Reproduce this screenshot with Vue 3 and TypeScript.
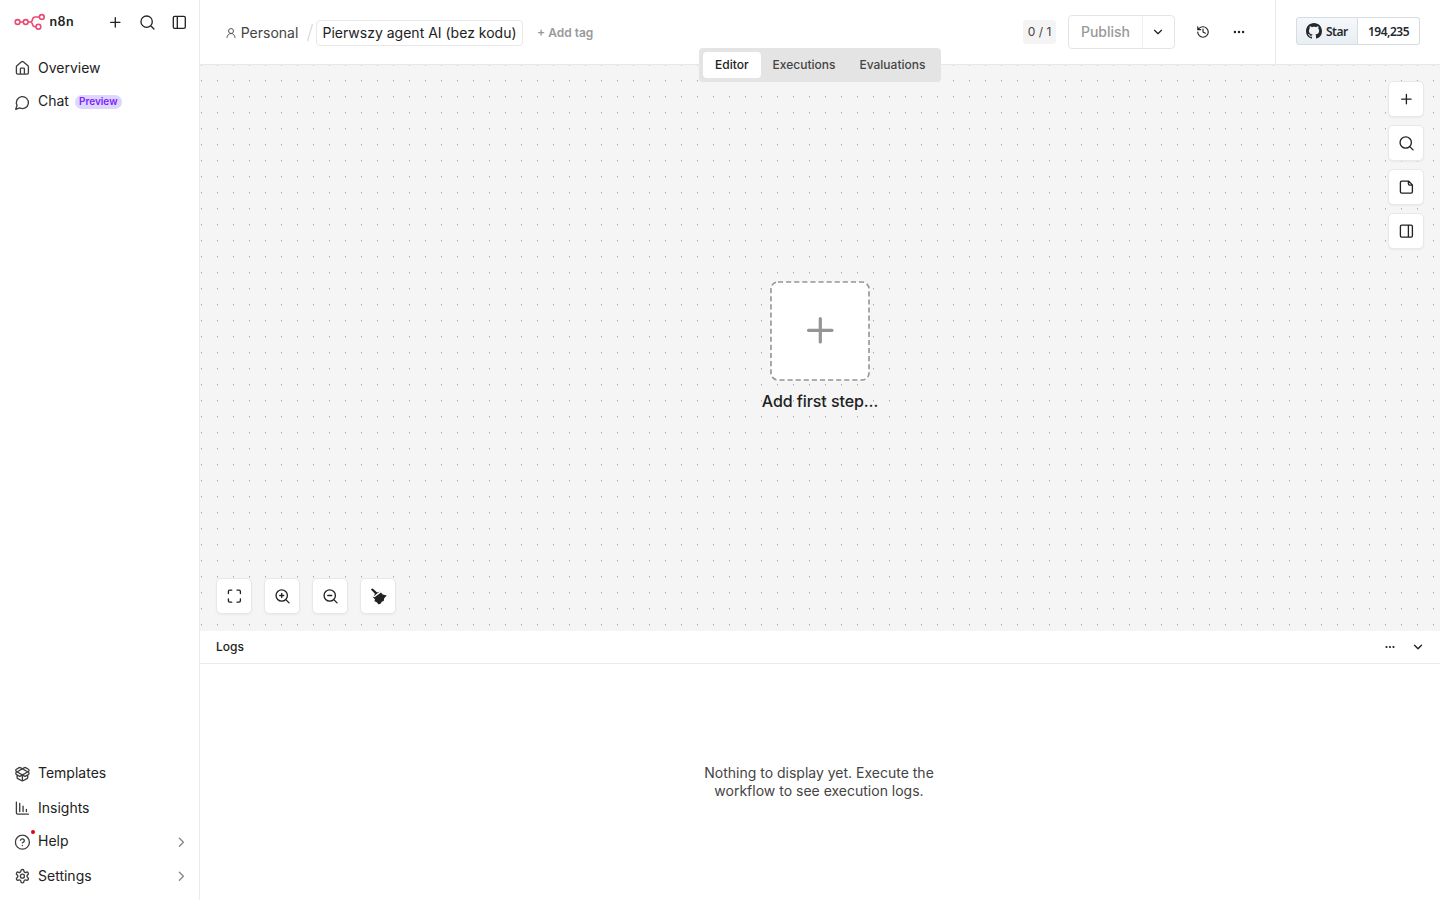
<script setup lang="ts">
import { h } from 'vue'

const circle = (cx: number, cy: number, r: number) =>
  `M${cx - r} ${cy}a${r} ${r} 0 1 0 ${2 * r} 0a${r} ${r} 0 1 0 ${-2 * r} 0`

const icons: Record<string, string> = {
  plus: 'M5 12h14M12 5v14',
  search: circle(11, 11, 8.5) + 'M22 22l-4.5-4.5',
  panelLeft: 'M5 3h14a2 2 0 0 1 2 2v14a2 2 0 0 1-2 2H5a2 2 0 0 1-2-2V5a2 2 0 0 1 2-2zM9 3v18',
  panelRight: 'M5 3h14a2 2 0 0 1 2 2v14a2 2 0 0 1-2 2H5a2 2 0 0 1-2-2V5a2 2 0 0 1 2-2zM15 3v18',
  home: 'M15 21v-8a1 1 0 0 0-1-1h-4a1 1 0 0 0-1 1v8M3 10a2 2 0 0 1 .709-1.528l7-5.999a2 2 0 0 1 2.582 0l7 5.999A2 2 0 0 1 21 10v9a2 2 0 0 1-2 2H5a2 2 0 0 1-2-2z',
  chat: 'M7.9 20A9 9 0 1 0 4 16.1L2 22Z',
  templates: 'M12 22v-9M15.17 2.21a1.67 1.67 0 0 1 1.63 0L21 4.57a1.93 1.93 0 0 1 0 3.36L8.82 14.79a1.655 1.655 0 0 1-1.64 0L3 12.43a1.93 1.93 0 0 1 0-3.36zM20 13v3.87a2.06 2.06 0 0 1-1.11 1.83l-6 3.08a1.93 1.93 0 0 1-1.78 0l-6-3.08A2.06 2.06 0 0 1 4 16.87V13M21 12.43a1.93 1.93 0 0 0 0-3.36L8.83 2.2a1.64 1.64 0 0 0-1.63 0L3 4.57a1.93 1.93 0 0 0 0 3.36l12.18 6.86a1.636 1.636 0 0 0 1.63 0z',
  insights: 'M3 3v16a2 2 0 0 0 2 2h16M8 17V5M13 17V9M18 17v-3',
  help: circle(12, 12, 10.5) + 'M9.09 9a3 3 0 0 1 5.83 1c0 2-3 3-3 3M12 17h.01',
  settings: 'M12.22 2h-.44a2 2 0 0 0-2 2v.18a2 2 0 0 1-1 1.73l-.43.25a2 2 0 0 1-2 0l-.15-.08a2 2 0 0 0-2.73.73l-.22.38a2 2 0 0 0 .73 2.73l.15.1a2 2 0 0 1 1 1.72v.51a2 2 0 0 1-1 1.74l-.15.09a2 2 0 0 0-.73 2.73l.22.38a2 2 0 0 0 2.73.73l.15-.08a2 2 0 0 1 2 0l.43.25a2 2 0 0 1 1 1.73V20a2 2 0 0 0 2 2h.44a2 2 0 0 0 2-2v-.18a2 2 0 0 1 1-1.73l.43-.25a2 2 0 0 1 2 0l.15.08a2 2 0 0 0 2.73-.73l.22-.39a2 2 0 0 0-.73-2.73l-.15-.08a2 2 0 0 1-1-1.74v-.5a2 2 0 0 1 1-1.74l.15-.09a2 2 0 0 0 .73-2.73l-.22-.38a2 2 0 0 0-2.73-.73l-.15.08a2 2 0 0 1-2 0l-.43-.25a2 2 0 0 1-1-1.73V4a2 2 0 0 0-2-2z' + circle(12, 12, 3),
  right: 'M9 18l6-6-6-6',
  down: 'M6 9l6 6 6-6',
  user: circle(12, 8, 5) + 'M20 21a8 8 0 0 0-16 0',
  history: 'M3 12a9 9 0 1 0 9-9 9.75 9.75 0 0 0-6.74 2.74L3 8M3 3v5h5M12 7v5l4 2',
  dots: circle(12, 12, 1) + circle(19, 12, 1) + circle(5, 12, 1),
  note: 'M15.5 3H5a2 2 0 0 0-2 2v14a2 2 0 0 0 2 2h14a2 2 0 0 0 2-2V8.5zM15 3v4a2 2 0 0 0 2 2h4',
  fit: 'M8 3H5a2 2 0 0 0-2 2v3M21 8V5a2 2 0 0 0-2-2h-3M3 16v3a2 2 0 0 0 2 2h3M16 21h3a2 2 0 0 0 2-2v-3',
  zoomIn: circle(11, 11, 8.5) + 'M22 22l-4.5-4.5M11 8v6M8 11h6',
  zoomOut: circle(11, 11, 8.5) + 'M22 22l-4.5-4.5M8 11h6',
}

const Icon = (props: { name: string; size?: number; weight?: number }) =>
  h(
    'svg',
    {
      viewBox: '0 0 24 24',
      width: props.size ?? 16,
      height: props.size ?? 16,
      fill: 'none',
      stroke: 'currentColor',
      'stroke-width': props.weight ?? 2,
      'stroke-linecap': 'round',
      'stroke-linejoin': 'round',
    },
    [h('path', { d: icons[props.name] })],
  )
Icon.props = ['name', 'size', 'weight']

const bottomItems = [
  { label: 'Templates', icon: 'templates' },
  { label: 'Insights', icon: 'insights' },
  { label: 'Help', icon: 'help', arrow: true, alert: true },
  { label: 'Settings', icon: 'settings', arrow: true },
]
const tools = ['plus', 'search', 'note', 'panelRight']
const zoomTools = ['fit', 'zoomIn', 'zoomOut']
</script>

<template>
  <div class="app">
    <aside class="sidebar">
      <div class="brand">
        <svg class="logo" width="32" height="18" viewBox="0 0 32 18" fill="none" stroke="#ea4b71" stroke-width="1.6">
          <circle cx="3.6" cy="9" r="2.4" />
          <circle cx="11.7" cy="9" r="2.4" />
          <circle cx="27.8" cy="4" r="2.4" />
          <circle cx="24.4" cy="13.7" r="2.4" />
          <path d="M6 9h3.3M14.1 9h2.1c1.7 0 2-.9 2.3-2.6.3-1.7 1-2.4 2.6-2.4h4.3M16.2 9c1.7 0 2 .8 2.3 2.4.3 1.6 1 2.3 2.6 2.3h.9" />
        </svg>
        <span class="wordmark">n8n</span>
        <div class="brand-actions">
          <Icon name="plus" />
          <Icon name="search" />
          <Icon name="panelLeft" />
        </div>
      </div>
      <nav class="nav top">
        <a class="item"><Icon name="home" /><span class="label">Overview</span></a>
        <a class="item chat"><Icon name="chat" /><span class="label">Chat</span><span class="preview">Preview</span></a>
      </nav>
      <nav class="nav bottom">
        <a v-for="item in bottomItems" :key="item.label" class="item" :class="item.icon">
          <Icon :name="item.icon" />
          <i v-if="item.alert" class="alert"></i>
          <span class="label">{{ item.label }}</span>
          <Icon v-if="item.arrow" class="arrow" name="right" />
        </a>
      </nav>
    </aside>

    <main class="main">
      <header class="header">
        <div class="crumbs">
          <Icon class="user" name="user" :size="12" />
          <span class="personal">Personal</span>
          <svg class="slash" width="8" height="20" viewBox="0 0 8 20"><path d="M6.5 1L1.5 18" stroke="#dcdcdc" stroke-width="1.3" /></svg>
          <span class="title">Pierwszy agent AI (bez kodu)</span>
          <span class="tag">+ Add tag</span>
        </div>
        <div class="actions">
          <span class="count">0 / 1</span>
          <div class="publish">
            <span class="publish-label">Publish</span>
            <span class="publish-more"><Icon name="down" :size="14" /></span>
          </div>
          <Icon class="history" name="history" :size="14" />
          <Icon class="more" name="dots" :size="14" :weight="2.2" />
        </div>
        <div class="github">
          <div class="star">
            <svg width="16" height="16" viewBox="0 0 16 16" fill="#24292f">
              <path d="M8 0c4.420 0 8 3.580 8 8a8.013 8.013 0 0 1-5.450 7.590c-.4.080-.550-.170-.550-.380 0-.270.010-1.130.010-2.200 0-.750-.250-1.230-.540-1.480 1.780-.200 3.650-.880 3.650-3.950 0-.880-.310-1.590-.820-2.150.080-.200.360-1.020-.080-2.120 0 0-.670-.220-2.200.820-.640-.180-1.320-.270-2-.270-.680 0-1.360.090-2 .270-1.530-1.030-2.200-.820-2.200-.820-.440 1.100-.160 1.920-.080 2.120-.510.560-.820 1.280-.820 2.150 0 3.060 1.860 3.750 3.640 3.950-.230.200-.440.550-.510 1.070-.460.210-1.610.550-2.330-.660-.150-.240-.600-.830-1.230-.820-.670.010-.270.380.010.530.340.190.730.900.820 1.130.160.450.680 1.310 2.690.940 0 .670.010 1.300.010 1.490 0 .210-.150.450-.550.380A7.995 7.995 0 0 1 0 8c0-4.420 3.580-8 8-8Z" />
            </svg>
            <span>Star</span>
          </div>
          <div class="stars">194,235</div>
        </div>
      </header>

      <section class="canvas">
        <div class="tabs">
          <span class="tab active">Editor</span>
          <span class="tab">Executions</span>
          <span class="tab">Evaluations</span>
        </div>
        <div class="toolbar">
          <button v-for="t in tools" :key="t" class="tool"><Icon :name="t" /></button>
        </div>
        <div class="first-step">
          <svg width="100" height="100" viewBox="0 0 100 100" fill="none">
            <rect x="1" y="1" width="98" height="98" rx="7" fill="#fff" stroke="#959595" stroke-width="1.6" stroke-dasharray="5.1 3" />
            <path d="M50.3 37.5v23.5M38.5 49.3h23.5" stroke="#959595" stroke-width="3.2" stroke-linecap="round" />
          </svg>
          <div class="step-label">Add first step…</div>
        </div>
        <div class="zoombar">
          <button v-for="t in zoomTools" :key="t" class="tool"><Icon :name="t" /></button>
          <button class="tool">
            <svg width="17" height="17" viewBox="0 0 17 17" fill="#222">
              <path d="M.5 1.400L2 0 6.800 4.300 9.400 3.400 3.400 8.100 4.500 5.600z" />
              <path d="M10.600 4.200L12.400 6.300 16.400 7.200 13.800 10 13.300 12.800 11.200 13.500 10.700 15 8.400 16.400 6 13.900 4 13 4.600 11.400 2.100 8.300 4.200 9z" />
            </svg>
          </button>
        </div>
      </section>

      <section class="logs">
        <div class="logs-head">
          <span class="logs-title">Logs</span>
          <div class="logs-actions">
            <Icon name="dots" :size="12" :weight="2.4" />
            <Icon name="down" :size="14" :weight="2.3" />
          </div>
        </div>
        <div class="empty">Nothing to display yet. Execute the<br />workflow to see execution logs.</div>
      </section>
    </main>
  </div>
</template>

<style>
body { background: #fff; overflow: hidden; }
</style>

<style scoped>
.app {
  display: flex;
  width: 1440px;
  height: 900px;
  overflow: hidden;
  font-family: Inter, "Liberation Sans", sans-serif;
  color: #222;
}
.app svg { display: block; flex: none; }
.sidebar {
  width: 200px;
  box-sizing: border-box;
  border-right: 1px solid #ebebeb;
  display: flex;
  flex-direction: column;
  flex: none;
}
.brand { display: flex; align-items: center; height: 44px; padding: 0 12px 0 14px; }
.wordmark { margin: -1px 0 0 3.500px; font-size: 12.5px; font-weight: 600; letter-spacing: .4px; }
.brand-actions { display: flex; gap: 16px; margin-left: auto; }
.brand-actions svg { transform: translate(.3px, .3px); }
.nav { display: flex; flex-direction: column; padding: 0 10px 0 14px; font-size: 14px; }
.top { margin-top: 7px; }
.bottom { margin-top: auto; padding-bottom: 7px; }
.item { display: flex; align-items: center; height: 34px; position: relative; }
.item > svg { color: #3d3d3d; transform: translate(.4px, .2px); }
.chat > svg { transform: translate(.4px, .6px); }
.label { margin-left: 8px; line-height: 20px; }
.chat .label, .help .label, .templates .label { margin-top: -2px; }
.preview {
  margin-left: 6px;
  height: 14px;
  line-height: 13px;
  padding: 0 4px;
  border-radius: 7px;
  background: #ddd6ff;
  color: #7f22fe;
  font-size: 10px;
  font-weight: 600;
}
.alert { position: absolute; left: 16.5px; top: 5px; width: 4px; height: 4px; border-radius: 50%; background: #e7000b; }
.item > .arrow { margin-left: auto; color: #888; }

.main { flex: 1; min-width: 0; display: flex; flex-direction: column; }
.header { height: 65px; box-sizing: border-box; border-bottom: 1px solid #e8e8e8; display: flex; flex: none; }
.crumbs { flex: 1; display: flex; align-items: center; padding: 2px 0 0 25px; font-size: 14px; }
.user { color: #555; }
.personal { margin: -1px 0 0 3.7px; color: #444; }
.slash { margin-left: 8px; }
.title { margin-left: 1.7px; height: 24px; line-height: 23px; padding: 0 5.5px; border: 1px solid #e8e8e8; border-radius: 4px; }
.tag { margin: -1px 0 0 14px; font-size: 12px; font-weight: 600; color: #999; }
.actions { display: flex; align-items: center; padding-right: 29px; border-right: 1px solid #e8e8e8; }
.count { width: 33px; height: 24px; line-height: 24px; text-align: center; background: #f4f4f4; border-radius: 4px; font-size: 12px; color: #444; }
.publish { margin-left: 12px; display: flex; height: 34px; width: 107px; box-sizing: border-box; border: 1px solid #e4e4e4; border-radius: 4px; }
.publish-label { width: 73px; border-right: 1px solid #eee; text-align: center; font-size: 14px; font-weight: 500; line-height: 32px; color: #999; }
.publish-more { flex: 1; display: flex; align-items: center; padding-left: 8px; }
.history { margin-left: 21px; }
.more { margin-left: 22px; }
.github { width: 164px; box-sizing: border-box; display: flex; align-items: flex-start; padding: 17px 0 0 20px; font: 600 12px/27px "Noto Sans", "Open Sans", sans-serif; letter-spacing: -.5px; color: #24292f; }
.star, .stars { box-sizing: border-box; height: 28px; border: 1px solid #d5dce2; }
.star { width: 62px; display: flex; align-items: center; padding-left: 9px; gap: 4px; background: linear-gradient(#f6f8fa, #e9eef3); border-radius: 3px 0 0 3px; }
.stars { width: 62px; text-align: center; border-left: 0; border-radius: 0 3px 3px 0; }

.canvas {
  position: relative;
  height: 566px;
  flex: none;
  background-color: #f5f5f5;
  background-image:
    conic-gradient(from 270deg at 1px 1px, #aaa 90deg, transparent 0),
    conic-gradient(from 270deg at 1px 1px, #d2d2d2 90deg, transparent 0);
  background-size: 16px 16px;
  background-position: 1px 15px, 1px 16px;
}
.tabs {
  position: absolute;
  left: 499px;
  top: -17px;
  width: 242px;
  height: 34px;
  box-sizing: border-box;
  padding: 4px;
  display: flex;
  border-radius: 4px;
  background: #e4e4e4;
  font-size: 12px;
  font-weight: 500;
  color: #444;
}
.tab { line-height: 26px; padding: 0 12px; }
.tab.active { background: #fff; color: #222; border-radius: 4px; }
.toolbar { position: absolute; right: 16px; top: 16px; display: flex; flex-direction: column; gap: 8px; }
.zoombar { position: absolute; left: 16px; bottom: 17px; display: flex; gap: 12px; }
.tool {
  width: 36px;
  height: 36px;
  box-sizing: border-box;
  padding: 0;
  display: flex;
  align-items: center;
  justify-content: center;
  border: 1px solid #e8e8e8;
  border-radius: 5px;
  background: #fff;
  color: #222;
  box-shadow: 0 1px 2px #0000000d;
}
.tool svg { transform: translate(.4px, .2px); }
.first-step { position: absolute; left: 520px; top: 216px; width: 200px; display: flex; flex-direction: column; align-items: center; }
.step-label { margin-top: 9px; font-size: 16px; line-height: 22px; font-weight: 500; letter-spacing: -.08px; }
.logs { flex: 1; display: flex; flex-direction: column; background: #fff; }
.logs-head { height: 33px; box-sizing: border-box; border-bottom: 1px solid #ebebeb; display: flex; align-items: center; justify-content: space-between; padding: 0 15px 0 16px; font-size: 12px; font-weight: 500; }
.logs-title { margin-top: -2px; }
.logs-actions { display: flex; align-items: center; gap: 15px; }
.empty { padding: 100px 2px 0 0; text-align: center; font-size: 14px; line-height: 18px; color: #444; }
</style>
